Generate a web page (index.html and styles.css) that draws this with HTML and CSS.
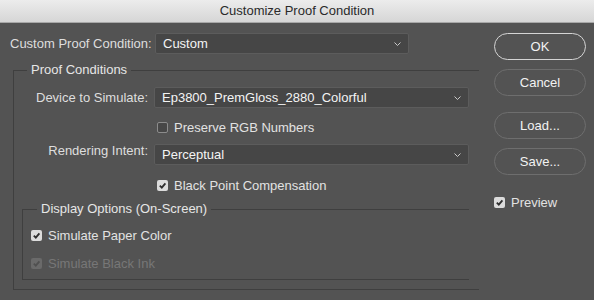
FILE: index.html
```html
<!DOCTYPE html>
<html>
<head>
<meta charset="utf-8">
<link rel="stylesheet" href="styles.css">
</head>
<body>
<div class="titlebar">Customize Proof Condition</div>
<div class="dialog">
  <div class="main">
    <div class="row-top">
      <span class="top-label">Custom Proof Condition:</span>
      <div class="select select-top"><span>Custom</span><svg class="chev" width="7" height="4" viewBox="0 0 7 4"><path d="M0.5 0.5 L3.5 3.5 L6.5 0.5" fill="none" stroke="#c8c8c8" stroke-width="1"/></svg></div>
    </div>
    <fieldset class="group outer">
      <legend class="legend-outer">Proof Conditions</legend>
      <div class="grid">
        <span class="label">Device to Simulate:</span>
        <div class="select"><span>Ep3800_PremGloss_2880_Colorful</span><svg class="chev" width="7" height="4" viewBox="0 0 7 4"><path d="M0.5 0.5 L3.5 3.5 L6.5 0.5" fill="none" stroke="#c8c8c8" stroke-width="1"/></svg></div>
        <span></span>
        <label class="check check-preserve"><span class="box"></span>Preserve RGB Numbers</label>
        <span class="label">Rendering Intent:</span>
        <div class="select select-intent"><span>Perceptual</span><svg class="chev" width="7" height="4" viewBox="0 0 7 4"><path d="M0.5 0.5 L3.5 3.5 L6.5 0.5" fill="none" stroke="#c8c8c8" stroke-width="1"/></svg></div>
        <span></span>
        <label class="check check-bpc"><span class="box on"><svg width="9" height="9" viewBox="0 0 9 9"><path d="M1.8 4.6 L3.8 6.6 L7.4 2.4" fill="none" stroke="#2e2e2e" stroke-width="1.8"/></svg></span>Black Point Compensation</label>
      </div>
      <fieldset class="group inner">
        <legend class="legend-inner">Display Options (On-Screen)</legend>
        <label class="check check-paper"><span class="box on"><svg width="9" height="9" viewBox="0 0 9 9"><path d="M1.8 4.6 L3.8 6.6 L7.4 2.4" fill="none" stroke="#2e2e2e" stroke-width="1.8"/></svg></span>Simulate Paper Color</label>
        <label class="check check-ink disabled"><span class="box on"><svg width="9" height="9" viewBox="0 0 9 9"><path d="M1.8 4.6 L3.8 6.6 L7.4 2.4" fill="none" stroke="#505050" stroke-width="1.8"/></svg></span>Simulate Black Ink</label>
      </fieldset>
    </fieldset>
  </div>
  <div class="side">
    <div class="btn btn-default">OK</div>
    <div class="btn btn-cancel">Cancel</div>
    <div class="btn btn-load">Load...</div>
    <div class="btn btn-save">Save...</div>
    <label class="check check-preview"><span class="box on"><svg width="9" height="9" viewBox="0 0 9 9"><path d="M1.8 4.6 L3.8 6.6 L7.4 2.4" fill="none" stroke="#2e2e2e" stroke-width="1.8"/></svg></span>Preview</label>
  </div>
</div>
</body>
</html>
```

FILE: styles.css
```css
* { box-sizing: border-box; }
html, body { margin: 0; padding: 0; }
body {
  width: 594px;
  height: 300px;
  overflow: hidden;
  background: #535353;
  font-family: "Liberation Sans", Arial, sans-serif;
  font-size: 13px;
  color: #dedede;
}
.titlebar {
  height: 23px;
  line-height: 22px;
  text-align: center;
  color: #2a2a2a;
  font-size: 13px;
  background: linear-gradient(#ececec, #d6d6d6);
  border-bottom: 1px solid #a8a8a8;
}
.dialog {
  display: flex;
  padding: 10px 0 0 10px;
}
.main {
  width: 469px;
}
.row-top {
  display: flex;
  align-items: center;
  height: 21px;
}
.top-label {
  width: 145px;
}
.select {
  display: flex;
  align-items: center;
  justify-content: space-between;
  height: 21px;
  padding: 0 7px 0 7px;
  background: #464646;
  border: 1px solid #5c5c5c;
  border-radius: 2px;
  color: #f4f4f4;
}
.select-top { width: 254px; }
.chev { display: block; }
.group {
  margin: 0;
  padding: 0;
  min-width: 0;
  border: 1px solid #3f3f3f;
  border-right: none;
}
.group legend {
  padding: 0 4px;
  line-height: 16px;
  color: #e6e6e6;
}
.outer {
  margin: 8px 0 0 3px;
}
.legend-outer { margin-left: 13px; }
.grid {
  display: grid;
  grid-template-columns: 134px 315px;
  column-gap: 6px;
  align-items: center;
  margin-top: 9px;
}
.label {
  text-align: right;
}
.check {
  display: flex;
  align-items: center;
  height: 16px;
  gap: 6px;
  color: #e2e2e2;
}
.check-preserve { margin: 11px 0 0 3px; }
.select-intent { margin-top: 9px; }
.check-bpc { margin: 12px 0 0 3px; }
.box {
  width: 11px;
  height: 11px;
  flex: none;
  border-radius: 2px;
  border: 1px solid #8c8c8c;
  background: #474747;
  display: flex;
  align-items: center;
  justify-content: center;
}
.box.on {
  border: none;
  background: #dcdcdc;
}
.box svg { display: block; }
.inner {
  margin: 8px 10px 9px 8px;
  padding: 0 0 8px 8px;
}
.legend-inner { margin-left: 6px; }
.check-paper { margin-top: 10px; }
.check-ink { margin-top: 12px; }
.disabled { color: #777; }
.disabled .box.on { background: #6a6a6a; }
.side {
  margin-left: 15px;
  width: 92px;
  display: flex;
  flex-direction: column;
}
.btn {
  height: 27px;
  border-radius: 14px;
  border: 1px solid #6e6e6e;
  display: flex;
  align-items: center;
  justify-content: center;
  color: #f2f2f2;
  font-size: 13px;
}
.btn-default {
  border: 1.5px solid #d4d4d4;
}
.btn-cancel { margin-top: 9px; }
.btn-load { margin-top: 16px; }
.btn-save { margin-top: 9px; }
.check-preview { margin-top: 19px; }
```
